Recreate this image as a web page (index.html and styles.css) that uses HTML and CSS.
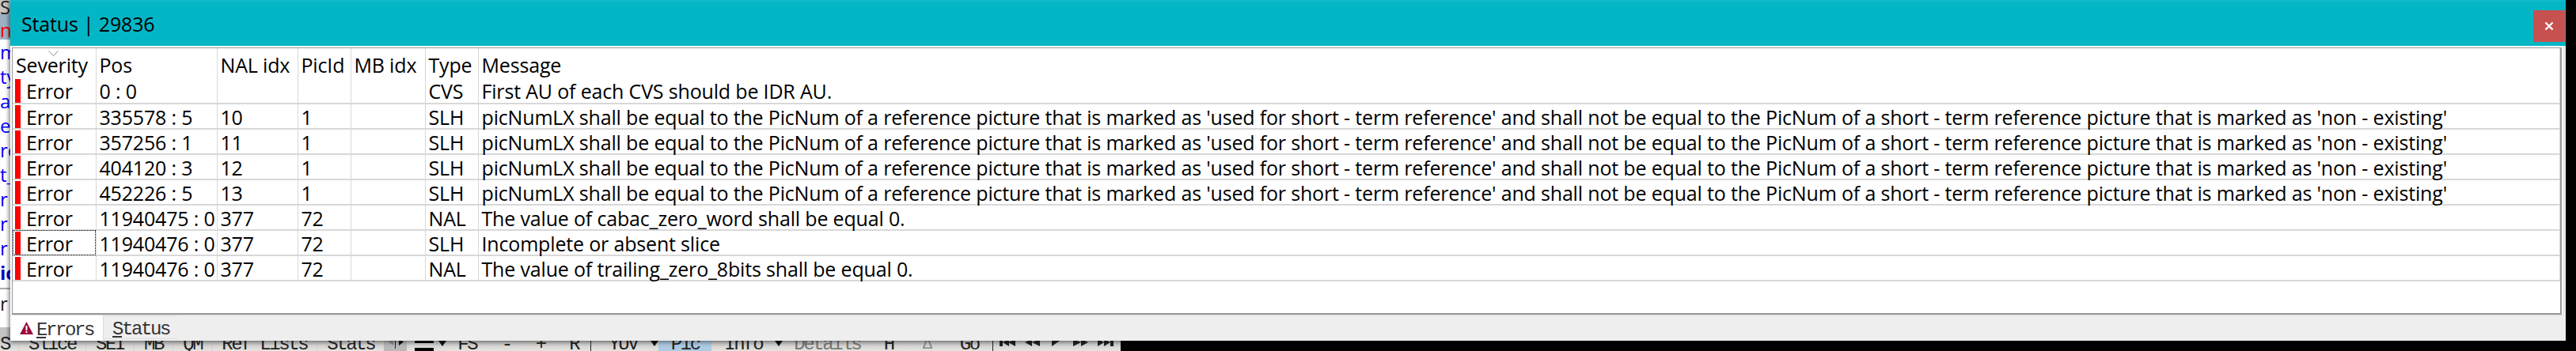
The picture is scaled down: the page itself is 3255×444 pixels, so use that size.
FILE: index.html
```html
<!DOCTYPE html>
<html lang="en">
<head>
  <meta charset="UTF-8" />
  <title>Status | 29836</title>
  <link rel="stylesheet" href="styles.css">
</head>
<body>
  <div class="app">
    <div class="side">
      <div class="side-top"><span class="side-s">S</span></div>
      <div class="side-band">n</div>
      <div class="side-list">
        <div>m</div>
        <div>ty</div>
        <div>a</div>
        <div>e_</div>
        <div>rc</div>
        <div>t_</div>
        <div>r</div>
        <div>r</div>
        <div>r</div>
        <div class="side-bold">ic</div>
      </div>
      <div class="side-foot">r</div>
    </div>

    <div class="toolbar">
      <span class="tool first">S</span>
      <span class="tool"><span>S<u>l</u>ice</span></span>
      <span class="tool">S<u>E</u>I</span>
      <span class="tool"><u>M</u>B</span>
      <span class="tool"><u>Q</u>M</span>
      <span class="tool"><u>R</u>ef Lists</span>
      <span class="tool last">S<u>t</u>ats</span>
      <span class="scroller">
        <svg width="29" height="14" viewBox="0 0 29 14"><path d="M12 1v9L6 5.500z" fill="#8e8e8e"/><path d="M14 0h1v14h-1z" fill="#222"/><path d="M19 1v9l6-4.500z" fill="#111"/></svg>
      </span>
      <span class="lines"></span>
      <span class="caret first-caret"></span>
      <span class="btn fs">FS</span>
      <span class="btn">-</span>
      <span class="btn">+</span>
      <span class="btn sep">R</span>
      <span class="tool yuv">YUV</span>
      <span class="caret"></span>
      <span class="btn pic">Pic</span>
      <span class="btn info">Info</span>
      <span class="caret"></span>
      <span class="btn details">Details</span>
      <span class="btn">H</span>
      <span class="btn delta">&#916;</span>
      <span class="btn go sep">Go</span>
      <svg class="nav" width="145" height="14" viewBox="0 0 145 14">
        <path d="M0 0h4v9H0zM4 4l8-4v9zM11 4l9-4v9z"/>
        <path d="M32 4l9-4v9zM41 4l10-4v9z"/>
        <path d="M66 0h13l-13 9z"/>
        <path d="M93 0l10 4-10 5zM103 0l9 4-9 5z"/>
        <path d="M124 0l8 4-8 5zM132 0l8 4-8 5zM140 0h4v9h-4z"/>
      </svg>
    </div>
  </div>

  <div class="window">
    <div class="titlebar">
      <div class="title">Status | 29836</div>
      <div class="close">
        <svg width="12" height="12" viewBox="0 0 12 12"><path d="M1.500 1.500l9 9M10.500 1.500l-9 9" stroke="#fff" stroke-width="2.400"/></svg>
      </div>
    </div>

    <div class="panel">
      <div class="frame">
        <svg class="sort" width="13" height="7" viewBox="0 0 13 7"><path d="M.5.500l6 6 6-6" fill="none" stroke="#8c8c8c"/></svg>
        <table>
          <colgroup>
            <col class="c-sev"><col class="c-pos"><col class="c-nal"><col class="c-pic"><col class="c-mb"><col class="c-type"><col>
          </colgroup>
          <thead>
            <tr><th>Severity</th><th>Pos</th><th>NAL idx</th><th>PicId</th><th>MB idx</th><th>Type</th><th>Message</th></tr>
          </thead>
          <tbody>
            <tr><td class="sev">Error</td><td>0 : 0</td><td></td><td></td><td></td><td>CVS</td><td>First AU of each CVS should be IDR AU.</td></tr>
            <tr><td class="sev">Error</td><td>335578 : 5</td><td>10</td><td>1</td><td></td><td>SLH</td><td>picNumLX shall be equal to the PicNum of a reference picture that is marked as 'used for short - term reference' and shall not be equal to the PicNum of a short - term reference picture that is marked as 'non - existing'</td></tr>
            <tr><td class="sev">Error</td><td>357256 : 1</td><td>11</td><td>1</td><td></td><td>SLH</td><td>picNumLX shall be equal to the PicNum of a reference picture that is marked as 'used for short - term reference' and shall not be equal to the PicNum of a short - term reference picture that is marked as 'non - existing'</td></tr>
            <tr><td class="sev">Error</td><td>404120 : 3</td><td>12</td><td>1</td><td></td><td>SLH</td><td>picNumLX shall be equal to the PicNum of a reference picture that is marked as 'used for short - term reference' and shall not be equal to the PicNum of a short - term reference picture that is marked as 'non - existing'</td></tr>
            <tr><td class="sev">Error</td><td>452226 : 5</td><td>13</td><td>1</td><td></td><td>SLH</td><td>picNumLX shall be equal to the PicNum of a reference picture that is marked as 'used for short - term reference' and shall not be equal to the PicNum of a short - term reference picture that is marked as 'non - existing'</td></tr>
            <tr><td class="sev">Error</td><td>11940475 : 0</td><td>377</td><td>72</td><td></td><td>NAL</td><td>The value of cabac_zero_word shall be equal 0.</td></tr>
            <tr><td class="sev focus">Error</td><td>11940476 : 0</td><td>377</td><td>72</td><td></td><td>SLH</td><td>Incomplete or absent slice</td></tr>
            <tr><td class="sev">Error</td><td>11940476 : 0</td><td>377</td><td>72</td><td></td><td>NAL</td><td>The value of trailing_zero_8bits shall be equal 0.</td></tr>
          </tbody>
        </table>
      </div>
    </div>

    <div class="tabs">
      <div class="tab active">
        <svg width="17" height="16" viewBox="0 0 17 16"><path d="M8.500 0L17 16H0z" fill="#9b0b3d"/><path d="M7.500 5h2v6h-2zM7.500 12h2v2h-2z" fill="#fff"/></svg>
        <span><u>E</u>rrors</span>
      </div>
      <div class="tab"><span><u>S</u>tatus</span></div>
    </div>
  </div>
</body>
</html>
```

FILE: styles.css
```css
body {
  margin: 0;
  width: 3255px;
  height: 444px;
  overflow: hidden;
  background: #000;
  font-family: "Open Sans", "Noto Sans", sans-serif;
  color: #000;
}

.app {
  display: flex;
  flex-direction: column;
  height: 444px;
}

/* what is left of the main window behind the dialog */
.side {
  width: 13px;
  height: 414px;
  overflow: hidden;
  background: #fff;
  font-size: 24px;
}

.side-top {
  height: 18px;
  background: #c9c5c1;
  line-height: 18px;
}

.side-s {
  color: #222;
}

.side-band {
  height: 32px;
  background: #9db0c4;
  color: #f00;
  line-height: 40px;
}

.side-list {
  height: 312px;
  color: #0000ff;
  line-height: 31px;
  white-space: nowrap;
}

.side-bold {
  font-weight: 700;
  color: #0000c8;
}

.side-foot {
  margin-top: 2px;
  height: 36px;
  border-top: 2px solid #aaa;
  line-height: 36px;
  color: #222;
}

.toolbar {
  display: flex;
  align-items: flex-end;
  width: 1416px;
  height: 30px;
  background: linear-gradient(#c4c4c4 50%, #e6e4e0);
  font-family: "Liberation Mono", monospace;
  font-size: 24px;
  letter-spacing: -2.4px;
  line-height: 32px;
  color: #222;
}

.toolbar svg {
  display: block;
}

.tool {
  height: 24px;
  padding: 0 12px;
  border-right: 1px solid #cfcfcf;
}

.tool.first {
  padding-left: 0;
  width: 24px;
  box-sizing: border-box;
}

.tool.last {
  border-right: 0;
}

.tool.yuv {
  padding: 0 17px 0 19px;
  border-right: 0;
}

.scroller {
  padding-bottom: 3px;
  background: #b9b9b9;
}

.lines {
  width: 24px;
  height: 13px;
  margin: 0 6px 0 10px;
  background: linear-gradient(#000 0 3px, transparent 3px 9px, #000 9px);
}

.caret {
  width: 0;
  height: 0;
  margin-bottom: 6px;
  border: 5px solid transparent;
  border-top: 7px solid #111;
  border-bottom: 0;
}

.first-caret {
  margin-right: 4px;
}

.btn {
  width: 43px;
  height: 24px;
  text-align: center;
}

.btn.fs {
  width: 44px;
  margin-right: 6px;
}

.btn.sep {
  margin-right: 3px;
  border-right: 1px solid #222;
  width: 42px;
}

.btn.pic {
  width: 67px;
  background: #aecbe3;
}

.btn.info {
  width: 80px;
}

.btn.details {
  width: 112px;
  color: #777;
}

.btn.delta {
  margin: 0 10px 0 5px;
  font-size: 20px;
  color: #8a8a8a;
}

.btn.go {
  margin-right: 8px;
  width: 53px;
  padding-right: 7px;
  box-sizing: border-box;
}

.nav {
  margin-bottom: 1px;
  fill: #222;
}

/* dialog */
.window {
  position: absolute;
  top: 0;
  left: 13px;
  width: 3229px;
  height: 431px;
  display: flex;
  flex-direction: column;
  background: #eee;
  box-shadow: -3px 0 4px rgba(0, 0, 0, 0.25), 0 3px 5px rgba(0, 0, 0, 0.3);
  font-size: 25px;
  letter-spacing: -0.17px;
}

.titlebar {
  display: flex;
  justify-content: space-between;
  align-items: flex-start;
  box-sizing: border-box;
  height: 58px;
  padding: 13px 1px 0 14px;
  background: linear-gradient(#16bccb 0, #03b6c6 3px);
}

.title {
  line-height: 34px;
}

.close {
  display: flex;
  justify-content: center;
  align-items: center;
  width: 40px;
  height: 40px;
  background: #c75050;
}

.panel {
  width: 3227px;
  height: 341px;
  box-sizing: border-box;
  padding: 2px;
  background: #fff;
  border-right: 1px solid #ddd;
  border-bottom: 1px solid #ddd;
}

.frame {
  position: relative;
  box-sizing: border-box;
  width: 3222px;
  height: 338px;
  border: 1px solid #98989e;
  border-width: 1px 2px 2px 1px;
  background: #fff;
}

.sort {
  position: absolute;
  top: 3px;
  left: 45px;
}

table {
  width: 100%;
  table-layout: fixed;
  border-collapse: collapse;
}

.c-sev { width: 105px; }
.c-pos { width: 153px; }
.c-nal { width: 102px; }
.c-pic { width: 67px; }
.c-mb { width: 94px; }
.c-type { width: 67px; }

th,
td {
  box-sizing: border-box;
  padding: 0 0 0 4px;
  border-right: 1px solid #d8d8d8;
  font-weight: 400;
  line-height: 28px;
  text-align: left;
  white-space: nowrap;
}

th {
  height: 38px;
  padding-top: 4px;
}

td {
  height: 32px;
  padding-top: 1px;
  border-bottom: 2px solid #d8d8d8;
}

.sev {
  padding-left: 17px;
  background: linear-gradient(#f00, #f00) 3px 1px / 7px 30px no-repeat;
}

.focus {
  outline: 1px dotted #000;
  outline-offset: -1px;
}

.tabs {
  display: flex;
  height: 32px;
  letter-spacing: -2.4px;
}

.tab {
  display: flex;
  align-items: center;
  gap: 4px;
  box-sizing: border-box;
  width: 117px;
  height: 32px;
  padding-left: 11px;
  font-family: "Liberation Mono", monospace;
  font-size: 24px;
  color: #333;
  background: #eee;
  border-top: 1px solid #ddd;
  border-left: 1px solid #ddd;
}

.tab span {
  padding-top: 5px;
}

.tab.active {
  padding-left: 12px;
  background: #fff;
  border: 0;
}

.tab:last-child {
  width: 94px;
  height: 30px;
  border-bottom: 1px solid #ddd;
}
```
